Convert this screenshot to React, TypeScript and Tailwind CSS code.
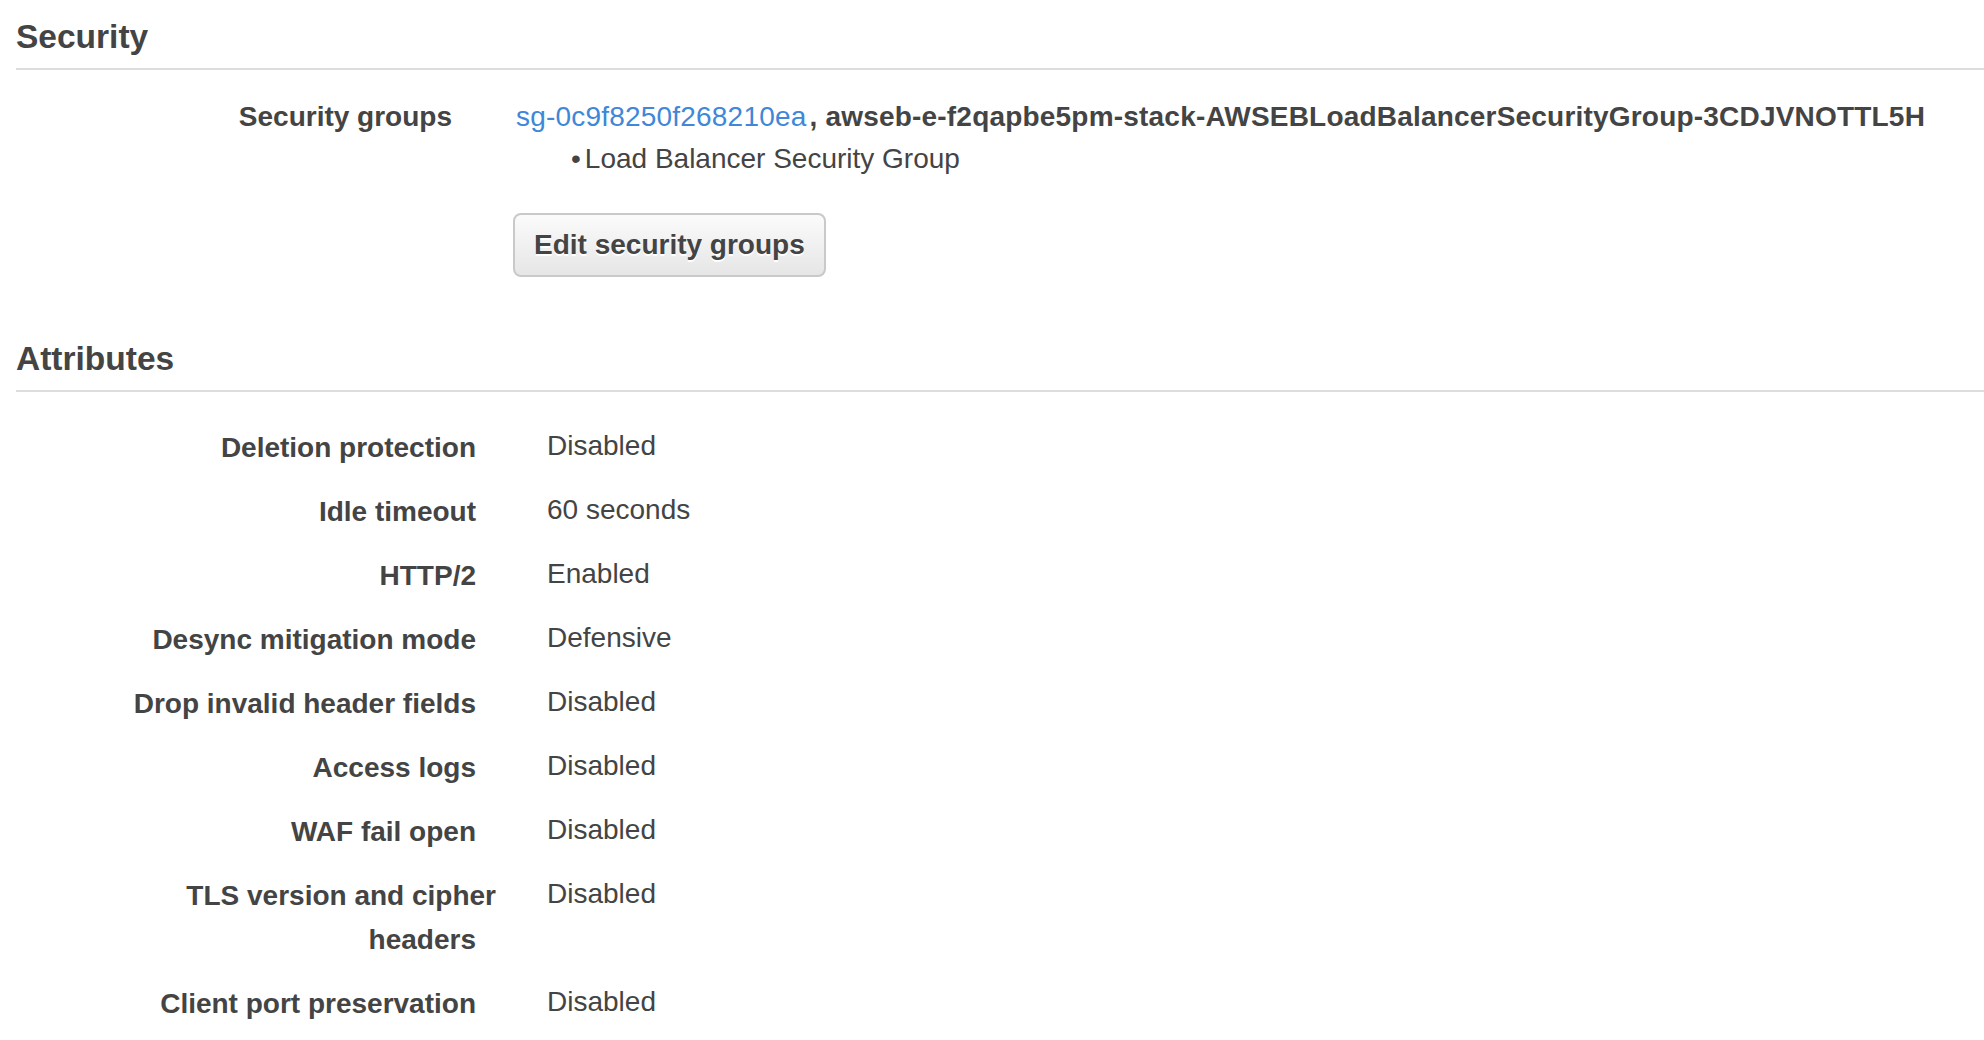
import React from 'react';

const attributes: Array<{ label: React.ReactNode; value: string }> = [
  { label: 'Deletion protection', value: 'Disabled' },
  { label: 'Idle timeout', value: '60 seconds' },
  { label: 'HTTP/2', value: 'Enabled' },
  { label: 'Desync mitigation mode', value: 'Defensive' },
  { label: 'Drop invalid header fields', value: 'Disabled' },
  { label: 'Access logs', value: 'Disabled' },
  { label: 'WAF fail open', value: 'Disabled' },
  {
    label: (
      <>
        <span className="block -mr-5">TLS version and cipher</span>
        <span className="block">headers</span>
      </>
    ),
    value: 'Disabled',
  },
  { label: 'Client port preservation', value: 'Disabled' },
];

function SectionHeader({ title }: { title: string }) {
  return (
    <div className="ml-4 pt-[17px] pb-[11px] border-b-2 border-[#dddddd]">
      <h2 className="text-[33.5px] leading-[40px] font-bold text-[#444444]">{title}</h2>
    </div>
  );
}

export default function App() {
  return (
    <div className="min-h-[1040px] w-full bg-white text-[#444444] font-['Liberation_Sans','Helvetica_Neue',Arial,sans-serif]">
      <SectionHeader title="Security" />

      <div className="flex items-start mt-[26px] text-[28px] leading-[42px]">
        <div className="w-[452px] shrink-0 text-right font-bold">Security groups</div>
        <div className="pl-[64px] whitespace-nowrap">
          <div className="tracking-[0.2px]">
            <a href="#" className="text-[#3f87d8]">sg-0c9f8250f268210ea</a>
            <span className="ml-[3px] font-bold">, awseb-e-f2qapbe5pm-stack-AWSEBLoadBalancerSecurityGroup-3CDJVNOTTL5H</span>
          </div>
          <div className="pl-[55px] flex">
            <span>•</span>
            <span className="ml-[4px]">Load Balancer Security Group</span>
          </div>
          <button
            type="button"
            className="mt-[33px] -ml-[3px] h-[64px] px-[19px] flex items-center rounded-[8px] border-2 border-[#c9c9c9] bg-gradient-to-b from-[#fbfbfb] to-[#e6e6e6] text-[28px] leading-[32px] font-bold text-[#444444] [text-shadow:0_2px_0_#ffffff]"
          >
            Edit security groups
          </button>
        </div>
      </div>

      <div className="mt-[45px]">
        <SectionHeader title="Attributes" />
      </div>

      <div className="mt-[24px] text-[28px] leading-[44px]">
        {attributes.map((row, i) => (
          <div key={i} className="flex items-start">
            <div className="w-[496px] shrink-0 pr-5 py-[10px] text-right font-bold">{row.label}</div>
            <div className="pl-[51px] pt-[8px]">{row.value}</div>
          </div>
        ))}
      </div>
    </div>
  );
}
